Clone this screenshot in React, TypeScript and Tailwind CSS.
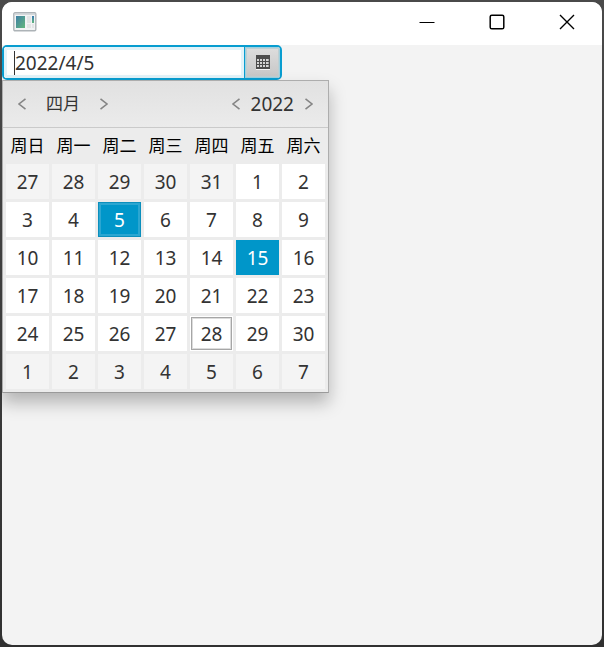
import React, { useState } from 'react';

const weekdays = ['周日', '周一', '周二', '周三', '周四', '周五', '周六'];

type Day = { label: number; outside: boolean; date: number };

const first = 27;
const days: Day[] = Array.from({ length: 42 }, (_, i) => {
  if (i < 5) return { label: first + i, outside: true, date: 0 };
  if (i < 35) return { label: i - 4, outside: false, date: i - 4 };
  return { label: i - 34, outside: true, date: 0 };
});
const weeks = Array.from({ length: 6 }, (_, i) => days.slice(i * 7, i * 7 + 7));

const TODAY = 28;
const FOCUSED = 15;

function Chevron({ flip = false }: { flip?: boolean }) {
  return (
    <svg width="10" height="14" viewBox="0 0 10 14" fill="none" stroke="#858585" strokeWidth="1.6" className={flip ? 'rotate-180' : ''} aria-hidden="true">
      <path d="M8.5 1.8 2 7l6.5 5.2" />
    </svg>
  );
}

function AppIcon() {
  return (
    <svg width="24" height="20" viewBox="0 0 24 20" aria-hidden="true">
      <defs>
        <linearGradient id="pane" x1="0" y1="0" x2="1" y2="1">
          <stop offset="0" stopColor="#3f7fa5" />
          <stop offset="1" stopColor="#62b77c" />
        </linearGradient>
        <linearGradient id="side" x1="0" y1="0" x2="0" y2="1">
          <stop offset="0" stopColor="#3978b0" />
          <stop offset="1" stopColor="#5fb77d" />
        </linearGradient>
      </defs>
      <rect x="0.8" y="0.8" width="22" height="18" rx="1.2" fill="#f1f3f4" stroke="#adb3b7" strokeWidth="1.4" />
      <path d="M1.5 2.2h21" stroke="#cbd0d3" strokeWidth="1.2" />
      <rect x="3" y="4" width="9" height="12" fill="url(#pane)" />
      <path d="M14 4h4v7h-4zM14 12h4v4h-4z" fill="#e2e4e5" />
      <rect x="19" y="4" width="2" height="7" fill="url(#side)" />
      <rect x="19" y="12" width="2" height="4" fill="#e2e4e5" />
    </svg>
  );
}

function CalendarIcon() {
  return (
    <svg width="14" height="16" viewBox="0 0 14 16" shapeRendering="crispEdges" aria-hidden="true">
      <rect width="14" height="14" fill="#4c4c4c" />
      <rect y="14" width="14" height="1" fill="#f4f4f4" />
      {[4, 7, 10].map((y) => [1, 4, 7, 10].map((x) => <rect key={`${x}-${y}`} x={x} y={y} width="2" height="2" fill="#d4d4d4" />))}
      {[4, 7, 10].map((y) => <rect key={y} x="12" y={y} width="1" height="2" fill="#a8a8a8" />)}
    </svg>
  );
}

function dayClass(day: Day, selected: number) {
  if (day.date && day.date === selected) {
    return 'bg-[#0096c9] text-white shadow-[inset_0_0_0_1px_#0b8fbd,inset_0_0_0_3px_#2ba6d1]';
  }
  if (day.date === FOCUSED) return 'bg-[#0096c9] text-white';
  if (day.date === TODAY) return 'bg-white text-[#333333] shadow-[inset_0_0_0_1px_#ffffff,inset_0_0_0_2px_#a6a6a6,inset_0_0_0_3px_#dcdcdc]';
  return day.outside ? 'bg-[#f4f4f4] text-[#333333]' : 'bg-white text-[#333333]';
}

export default function App() {
  const [value, setValue] = useState('2022/4/5');
  const [selected, setSelected] = useState(5);

  return (
    <div className="flex min-h-screen bg-linear-to-b from-[#4a4a4a] to-[#303030] p-0.5 font-['Noto_Sans','Noto_Sans_CJK_SC',sans-serif] text-[19px] leading-6 text-[#333333]">
      <main className="flex flex-1 flex-col overflow-hidden rounded-[10px] bg-[#f3f3f3]">
        <header className="flex h-[43px] items-center justify-between bg-white pb-[3px] pl-[11px] text-black">
          <AppIcon />
          <div className="flex h-full">
            <button aria-label="最小化" className="flex w-[70px] items-center justify-center">
              <svg width="16" height="16" viewBox="0 0 16 16" stroke="currentColor" strokeWidth="1" aria-hidden="true"><path d="M.5 8.5h15" /></svg>
            </button>
            <button aria-label="最大化" className="flex w-[70px] items-center justify-center">
              <svg width="16" height="16" viewBox="0 0 16 16" fill="none" stroke="currentColor" strokeWidth="1.5" aria-hidden="true"><rect x="1.2" y="1.2" width="13.6" height="13.6" rx="1.6" /></svg>
            </button>
            <button aria-label="关闭" className="flex w-[70px] items-center justify-center">
              <svg width="16" height="16" viewBox="0 0 16 16" stroke="currentColor" strokeWidth="1.4" aria-hidden="true"><path d="m1 1 14 14M15 1 1 15" /></svg>
            </button>
          </div>
        </header>

        <div className="relative w-[280px]">
          <div className="flex h-[35px] overflow-hidden rounded-[5px] border-2 border-[#089dd0] bg-white">
            <div className="flex min-w-0 flex-1 items-center bg-white pl-[10px] shadow-[inset_0_0_0_3px_#e2f3f9]">
              <span className="h-6 w-px bg-[#333333]" aria-hidden="true" />
              <input
                aria-label="日期"
                value={value}
                onChange={(e) => setValue(e.target.value)}
                className="h-6 w-full min-w-0 bg-transparent text-[#333333] outline-none"
              />
            </div>
            <button aria-label="打开日历" className="flex w-[36px] items-center justify-center border-l border-[#089dd0] bg-linear-to-b from-[#dedede] to-[#c6c6c6] shadow-[inset_0_0_0_1px_#9fd0df,inset_0_0_0_2px_#bfcfd2]">
              <CalendarIcon />
            </button>
          </div>

          <section aria-label="日历" className="absolute top-full left-0 w-[327px] border border-[#adadad] border-b-[#9a9a9a] bg-[#ececec] shadow-[0_10px_16px_rgba(0,0,0,0.26)]">
            <div className="flex h-[47px] items-center justify-between border-b border-[#cacaca] bg-linear-to-b from-[#e1e1e1] to-[#ebebeb] px-[14px]">
              <div className="flex items-center gap-[19px]">
                <button aria-label="上个月"><Chevron /></button>
                <span className="text-[17px]">四月</span>
                <button aria-label="下个月"><Chevron flip /></button>
              </div>
              <div className="flex items-center gap-[10px]">
                <button aria-label="上一年"><Chevron /></button>
                <span>2022</span>
                <button aria-label="下一年"><Chevron flip /></button>
              </div>
            </div>
            <table className="w-full table-fixed border-separate border-spacing-x-[3px] border-spacing-y-0">
              <thead>
                <tr>
                  {weekdays.map((name) => (
                    <th key={name} scope="col" className="h-[36px] p-0 text-center text-[17px] font-normal whitespace-nowrap text-black">{name}</th>
                  ))}
                </tr>
              </thead>
              <tbody>
                {weeks.map((week, row) => (
                  <tr key={row}>
                    {week.map((day, col) => (
                      <td key={col} className="p-0 pb-[3px]">
                        <button
                          onClick={() => {
                            if (!day.outside) {
                              setSelected(day.date);
                              setValue(`2022/4/${day.date}`);
                            }
                          }}
                          className={`flex h-[35px] w-full items-center justify-center ${dayClass(day, selected)}`}
                        >
                          {day.label}
                        </button>
                      </td>
                    ))}
                  </tr>
                ))}
              </tbody>
            </table>
          </section>
        </div>
      </main>
    </div>
  );
}
